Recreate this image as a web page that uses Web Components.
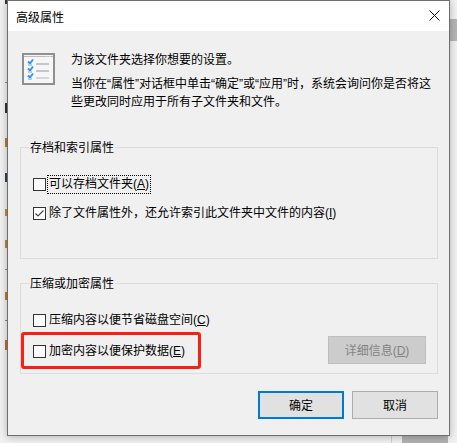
<!DOCTYPE html>
<html lang="zh">
<head>
<meta charset="utf-8">
<style>
  html, body { margin: 0; padding: 0; width: 457px; height: 443px; overflow: hidden; background: #f3f3f3; }
  body { font-family: "Liberation Sans", "Noto Sans CJK SC", sans-serif; font-size: 12px; color: #000; }
  .crypt-row { display: flex; justify-content: space-between; align-items: center; margin-right: -1px; }
  .crypt-row check-row { margin-top: 3px; }
  .actions { display: flex; justify-content: flex-end; gap: 8px; padding: 0 11px 16px 0; }
</style>
</head>
<body>
<desktop-backdrop>
  <props-dialog heading="高级属性">
    <intro-block>
      <p>为该文件夹选择你想要的设置。</p>
      <p>当你在“属性”对话框中单击“确定”或“应用”时，系统会询问你是否将这些更改同时应用于所有子文件夹和文件。</p>
    </intro-block>
    <group-box legend="存档和索引属性" class="archive">
      <check-row focused>可以存档文件夹(<u>A</u>)</check-row>
      <check-row checked>除了文件属性外，还允许索引此文件夹中文件的内容(<u>I</u>)</check-row>
    </group-box>
    <group-box legend="压缩或加密属性" class="crypt">
      <check-row>压缩内容以便节省磁盘空间(<u>C</u>)</check-row>
      <div class="crypt-row">
        <check-row marked>加密内容以便保护数据(<u>E</u>)</check-row>
        <win-button disabled>详细信息(<u>D</u>)</win-button>
      </div>
    </group-box>
    <div class="actions" slot="actions">
      <win-button primary>确定</win-button>
      <win-button>取消</win-button>
    </div>
  </props-dialog>
</desktop-backdrop>
<script>
// what peeks out from behind the dialog on the left: [top, height, colour]
const SLIVERS = [[0, 4, '#3a3a3a'], [82, 1, '#8a8a8a'], [103, 10, '#333'], [138, 9, '#c07a2a'], [173, 9, '#30405a'],
  [209, 7, '#d08a3a'], [240, 8, '#b98a3a'], [269, 1, '#8a8a8a'], [292, 8, '#c9742a'], [320, 1, '#8a8a8a'], [340, 10, '#c0702a']];

class DesktopBackdrop extends HTMLElement {
  constructor() {
    super();
    let y = 0;
    const bits = SLIVERS.map(([top, h, c]) => {
      const s = `<i style="margin-top:${top - y}px;height:${h}px;background:${c}"></i>`;
      y = top + h;
      return s;
    }).join('');
    this.attachShadow({ mode: 'open' }).innerHTML = `
      <style>
        :host { display: grid; grid-template-columns: 7px 443px; align-items: start; width: 457px; height: 443px;
                background:
                  linear-gradient(#b6b6b6, #b6b6b6) 450px 19px / 7px 22px no-repeat,
                  linear-gradient(#b4b4b4, #b4b4b4) 402px 436px / 46px 7px no-repeat,
                  linear-gradient(#d0d0d0, #d0d0d0) 391px 436px / 1px 7px no-repeat,
                  #f2f2f2; }
        .strip { display: flex; flex-direction: column; align-items: flex-end; }
        .strip i { display: block; width: 2px; }
      </style>
      <div class="strip">${bits}</div>
      <slot></slot>`;
  }
}

class PropsDialog extends HTMLElement {
  constructor() {
    super();
    this.attachShadow({ mode: 'open' }).innerHTML = `
      <style>
        :host { display: flex; flex-direction: column; width: 443px; height: 436px; box-sizing: border-box; background: #f0f0f0;
                border: 1px solid #6e6e6e; box-shadow: 0 1px 8px rgba(0,0,0,.28); }
        .title { height: 30px; flex: none; background: #fff; display: flex; align-items: center; justify-content: space-between; padding: 0 9px 0 8px; }
        .close { width: 11px; height: 11px; display: block; margin-top: -1px; }
        .body { flex: 1; display: flex; flex-direction: column; padding: 22px 11px 0 12px; }
        .foot { flex: none; }
      </style>
      <div class="title"><span id="t"></span>
        <svg class="close" viewBox="0 0 11 11"><path d="M.5.5 10.5 10.5M10.5.5 .5 10.5" stroke="#111" stroke-width="1" fill="none"/></svg>
      </div>
      <div class="body"><slot></slot></div>
      <div class="foot"><slot name="actions"></slot></div>`;
    this.shadowRoot.getElementById('t').textContent = this.getAttribute('heading');
  }
}

class IntroBlock extends HTMLElement {
  constructor() {
    super();
    this.attachShadow({ mode: 'open' }).innerHTML = `
      <style>
        :host { display: flex; gap: 16px; height: 94px; }
        svg { flex: none; width: 33px; height: 32px; margin-left: 2px; }
        .text { flex: 1; margin-top: -2px; line-height: 18px; }
        ::slotted(p) { margin: 0 0 6px; }
      </style>
      <svg viewBox="0 0 33 32">
        <rect x="1" y="1" width="31" height="30" fill="#f6f6f6" stroke="#8f8f8f" stroke-width="2"/>
        <path d="M2 3.5h29" stroke="#bdbdbd"/>
        <path d="M24 3h1M27 3h1" stroke="#f4f4f4"/>
        <path d="M14 11h13M14 18h13" stroke="#b6b6b6" stroke-width="1.5"/>
        <path d="M14 25h13" stroke="#cdcdcd" stroke-width="1.5"/>
        <path d="M6 8.5l2 2 3-4M6 15.5l2 2 3-4M6 22.5l2 2 3-4" stroke="#3f95dd" stroke-width="2" fill="none"/>
        <path d="M6 12h4M6 19h4M6 26h4" stroke="#a9d0ef" stroke-width="2"/>
      </svg>
      <div class="text"><slot></slot></div>`;
  }
}

class GroupBox extends HTMLElement {
  constructor() {
    super();
    this.attachShadow({ mode: 'open' }).innerHTML = `
      <style>
        :host { display: block; position: relative; box-sizing: border-box; border: 1px solid #dcdcdc; padding: 29px 12px 0 12px; }
        :host(.archive) { height: 112px; }
        :host(.crypt) { height: 91px; margin-top: 24px; }
        .legend { position: absolute; left: 8px; top: -8px; padding: 0 1px; background: #f0f0f0; line-height: 16px; }
        .rows { display: flex; flex-direction: column; gap: 14px; }
        :host(.crypt) .rows { gap: 8px; }
      </style>
      <span class="legend" id="l"></span>
      <div class="rows"><slot></slot></div>`;
    this.shadowRoot.getElementById('l').textContent = this.getAttribute('legend');
  }
}

class CheckRow extends HTMLElement {
  constructor() {
    super();
    const checked = this.hasAttribute('checked');
    this.attachShadow({ mode: 'open' }).innerHTML = `
      <style>
        :host { display: flex; align-items: center; height: 15px; position: relative; }
        .box { flex: none; width: 13px; height: 13px; box-sizing: border-box; border: 1px solid #333; background: #fff; margin-right: 2px; display: block; }
        .label { line-height: 17px; white-space: nowrap; padding: 0 1px; }
        :host([focused]) .label { outline: 1px dotted #000; }
        .mark { position: absolute; left: -12px; top: -12px; width: 180px; height: 37px; box-sizing: border-box;
                border: 3px solid #fb1f0f; border-radius: 3px; display: none; }
        :host([marked]) .mark { display: block; }
      </style>
      <svg class="box" viewBox="0 0 11 11">${checked ? '<path d="M1.5 5.5 4 8 9.5 2.5" stroke="#444" stroke-width="1.2" fill="none"/>' : ''}</svg>
      <span class="label"><slot></slot></span>
      <span class="mark"></span>`;
  }
}

class WinButton extends HTMLElement {
  constructor() {
    super();
    this.attachShadow({ mode: 'open' }).innerHTML = `
      <style>
        :host { display: flex; align-items: center; justify-content: center; box-sizing: border-box; width: 86px; height: 28px; padding-top: 1px;
                border: 1px solid #adadad; background: #e1e1e1; color: #000; line-height: 16px; }
        :host([primary]) { border: 2px solid #0078d7; }
        :host([disabled]) { width: 98px; background: #cccccc; border-color: #bfbfbf; color: #838383; }
      </style>
      <slot></slot>`;
  }
}

customElements.define('desktop-backdrop', DesktopBackdrop);
customElements.define('props-dialog', PropsDialog);
customElements.define('intro-block', IntroBlock);
customElements.define('group-box', GroupBox);
customElements.define('check-row', CheckRow);
customElements.define('win-button', WinButton);
</script>
</body>
</html>
